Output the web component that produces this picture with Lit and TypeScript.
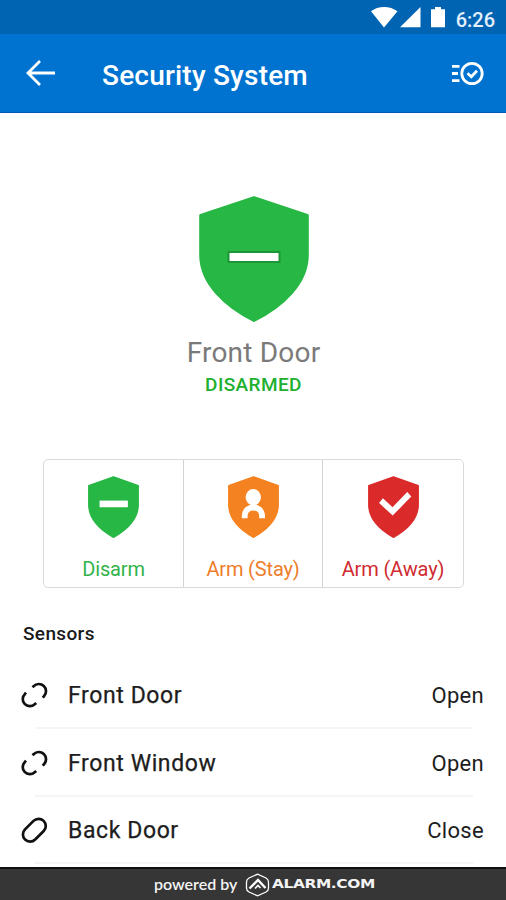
import { LitElement, html, svg, css } from "lit";
import { customElement, property } from "lit/decorators.js";

type Mode = "disarm" | "stay" | "away";

@customElement("shield-icon")
class ShieldIcon extends LitElement {
  @property() mode: Mode = "disarm";
  @property({ type: Boolean }) outlined = false;
  static styles = css`
    :host { display: block; }
    svg { display: block; width: 100%; height: 100%; overflow: visible; }
    .disarm { fill: #27b744; stroke: #27b744; }
    .stay { fill: #f58220; stroke: #f58220; }
    .away { fill: #db2a2a; stroke: #db2a2a; }
    .body { stroke-width: 3; stroke-linejoin: round; }
    .glyph { fill: #fff; }
    .rim { stroke: #1c9636; stroke-width: 2; }
    .line { fill: none; stroke: #fff; }
  `;
  glyph() {
    if (this.mode === "disarm") {
      return this.outlined
        ? svg`<rect class="glyph rim" x="29.5" y="56" width="51" height="10"/>`
        : svg`<rect class="glyph" x="25" y="50" width="61" height="13.5"/>`;
    }
    if (this.mode === "stay") {
      return svg`<circle class="glyph" cx="54.5" cy="43" r="16.5"/>
        <path class="line" stroke-width="12.5" d="M36 86 V82 C36 58 73.5 58 73.5 82 V86"/>`;
    }
    return svg`<path class="line" stroke-width="12.5" d="M28 50 L53 72 L89 37"/>`;
  }
  render() {
    return html`<svg viewBox="0 0 110 126" preserveAspectRatio="none">
      <path class="body ${this.mode}" d="M55 1.7 L108.3 19.5 V59 C108.3 87 84 110 55 124.5 C26 110 1.7 87 1.7 59 V19.5 Z"/>
      ${this.glyph()}
    </svg>`;
  }
}

@customElement("sensor-row")
class SensorRow extends LitElement {
  @property() name = "";
  @property() state = "";
  static styles = css`
    :host { display: flex; align-items: center; height: 67.4px; padding: 0 22px 0 21px; box-sizing: border-box; position: relative; color: #1d1d1d; }
    :host::after { content: ""; position: absolute; left: 35px; right: 33px; bottom: 0; height: 2px; background: #f5f5f5; }
    svg { width: 27px; height: 27px; margin-right: 20px; }
    path { fill: none; stroke: #111; stroke-width: 2.7; }
    .name { flex: 1; font-size: 23px; letter-spacing: 0.6px; font-weight: 400; -webkit-text-stroke: 0.25px #1d1d1d; }
    .state { font-size: 22px; letter-spacing: 0.3px; }
  `;
  render() {
    return html`
      <svg viewBox="0 0 27 27">
        ${this.state === "Open"
          ? svg`<path d="M11.5 5.3 L12.6 4.2 A7 7 0 0 1 23 14.2 L21.7 15.6 M5 10.7 L4 11.9 A7 7 0 0 0 13.7 22.3 L15.2 20.9"/>`
          : svg`<path d="M4 12.4 L12.5 3.9 A7.1 7.1 0 0 1 22.7 14 L14.2 22.5 A7.1 7.1 0 0 1 4 12.4 Z"/>`}
      </svg>
      <span class="name">${this.name}</span><span class="state">${this.state}</span>`;
  }
}

@customElement("app-root")
class AppRoot extends LitElement {
  static styles = css`
    :host { display: flex; flex-direction: column; width: 506px; height: 900px; overflow: hidden; background: #fff; font-family: Roboto, sans-serif; }
    svg { display: block; }
    .status { height: 34px; flex: none; background: #0064b3; display: flex; justify-content: flex-end; align-items: center; color: #e3effa; padding-right: 11px; box-sizing: border-box; }
    .status svg { width: 76px; height: 22px; margin: 0 9px 0 0; }
    .status span { font-size: 20px; font-weight: 500; line-height: 22px; padding-top: 6px; }
    .white { fill: #fff; }
    .bar { height: 79px; flex: none; box-sizing: border-box; background: #0073d1; border-bottom: 1px solid #0058b8; display: flex; align-items: center; padding: 0 21px 0 25px; color: #fff; }
    .bar .back { width: 30px; height: 28px; }
    .bar h1 { flex: 1; margin: 5px 0 0 47px; font-size: 28px; line-height: 34px; font-weight: 500; letter-spacing: 0.2px; }
    .bar .check { width: 34px; height: 26px; }
    .stroke { fill: none; stroke: #fff; }
    .hero { height: 346px; flex: none; display: flex; flex-direction: column; align-items: center; padding: 83px 0 0 1px; box-sizing: border-box; }
    .hero shield-icon { width: 110px; height: 126px; }
    .hero .place { font-size: 28px; line-height: 32px; margin-top: 15px; color: #7a7a7a; letter-spacing: 0.2px; }
    .hero .mode { font-size: 19px; line-height: 24px; font-weight: 500; margin-top: 4px; color: #20b030; letter-spacing: 0.4px; }
    .modes { display: grid; grid-template-columns: 139px 139px 1fr; margin: 0 42px 0 43px; height: 129px; flex: none; box-sizing: border-box; border: 1px solid #dadada; border-radius: 5px; }
    .choice { display: flex; flex-direction: column; align-items: center; padding-top: 15.5px; font-size: 20px; line-height: 24px; letter-spacing: -0.15px; }
    .choice + .choice { border-left: 1px solid #d3d3d3; }
    .choice shield-icon { width: 51px; height: 62px; margin-bottom: 19px; }
    .green { color: #32b34a; } .orange { color: #ee7d2b; } .red { color: #cf2b31; }
    h2 { margin: 34px 0 0 23px; font-size: 19px; line-height: 24px; height: 40px; flex: none; font-weight: 500; color: #1a1a1a; letter-spacing: 0.35px; }
    .list { height: 205px; flex: none; display: flex; flex-direction: column; }
    footer { flex: 1; min-height: 33px; box-sizing: border-box; background: #363636; border-top: 2px solid #101010; color: #f4f4f4; display: flex; align-items: center; padding-left: 154px; }
    footer .by { font-family: Lato, sans-serif; font-size: 16px; font-weight: 600; line-height: 20px; width: 91px; padding-bottom: 2px; }
    footer svg { width: 25px; height: 24px; }
    footer .brand { font-family: "DejaVu Sans", sans-serif; font-weight: 700; font-size: 11.5px; line-height: 20px; margin-left: 2px; padding-bottom: 2px; letter-spacing: -0.3px; transform: scaleX(1.34); transform-origin: left; }
  `;
  render() {
    return html`
      <div class="status">
        <svg viewBox="0 0 76 22">
          <path class="white" d="M0 5.2 C7 -.5 19 -.5 26.5 5.2 L13 21.5 Z M49.5 1 V21.3 H29 Z M60 3.2 H64 V1 H70 V3.2 H74 V21.3 H60 Z"/>
        </svg>
        <span>6:26</span>
      </div>
      <div class="bar">
        <svg class="back" viewBox="0 0 30 28"><path class="stroke" stroke-width="2.8" d="M15 2 L3 14 L15 26 M3 14 H30"/></svg>
        <h1>Security System</h1>
        <svg class="check" viewBox="0 0 34 26">
          <path class="stroke" stroke-width="2.8" d="M1 6.3 H8.5 M1 13.5 H7 M1 20.7 H8.5"/>
          <circle class="stroke" stroke-width="2.8" cx="21" cy="13.5" r="10.2"/>
          <path class="stroke" stroke-width="2.8" d="M16.5 13.3 L20.3 16.7 L26 10.7"/>
        </svg>
      </div>
      <div class="hero">
        <shield-icon mode="disarm" outlined></shield-icon>
        <div class="place">Front Door</div>
        <div class="mode">DISARMED</div>
      </div>
      <div class="modes">
        <div class="choice green"><shield-icon mode="disarm"></shield-icon>Disarm</div>
        <div class="choice orange"><shield-icon mode="stay"></shield-icon>Arm (Stay)</div>
        <div class="choice red"><shield-icon mode="away"></shield-icon>Arm (Away)</div>
      </div>
      <h2>Sensors</h2>
      <div class="list">
        <sensor-row name="Front Door" state="Open"></sensor-row>
        <sensor-row name="Front Window" state="Open"></sensor-row>
        <sensor-row name="Back Door" state="Close"></sensor-row>
      </div>
      <footer>
        <span class="by">powered by</span>
        <svg viewBox="0 0 25 24">
          <path class="stroke" stroke-width="1.3" d="M12.5 1.2 L21 5 Q23.5 6.3 23.5 9 V15 Q23.5 17.7 21 19 L12.5 22.8 L4 19 Q1.5 17.7 1.5 15 V9 Q1.5 6.3 4 5 Z"/>
          <path class="stroke" stroke-width="2.4" d="M4.5 15.5 L13 7 L20.5 15"/>
          <path class="stroke" stroke-width="1.6" d="M10 15.5 L13 12.5 L15.5 15"/>
        </svg>
        <span class="brand">ALARM.COM</span>
      </footer>`;
  }
}
